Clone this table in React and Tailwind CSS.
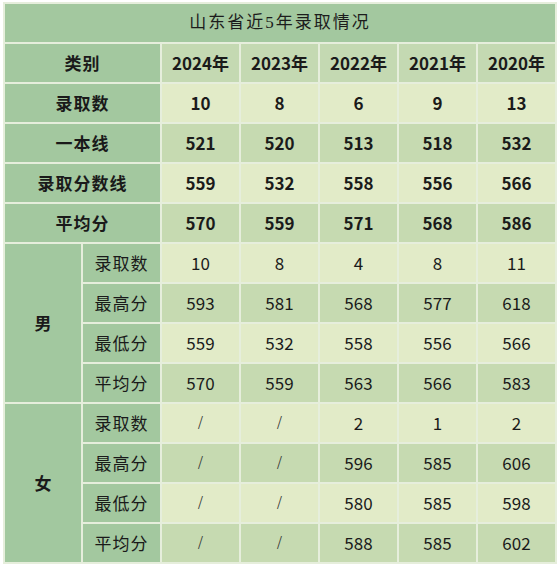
import React from "react";

const years = ["2024年", "2023年", "2022年", "2021年", "2020年"];
const top = [
  ["录取数", ["10", "8", "6", "9", "13"]],
  ["一本线", ["521", "520", "513", "518", "532"]],
  ["录取分数线", ["559", "532", "558", "556", "566"]],
  ["平均分", ["570", "559", "571", "568", "586"]],
];
const groups = [
  [
    "男",
    [
      ["录取数", ["10", "8", "4", "8", "11"]],
      ["最高分", ["593", "581", "568", "577", "618"]],
      ["最低分", ["559", "532", "558", "556", "566"]],
      ["平均分", ["570", "559", "563", "566", "583"]],
    ],
  ],
  [
    "女",
    [
      ["录取数", ["/", "/", "2", "1", "2"]],
      ["最高分", ["/", "/", "596", "585", "606"]],
      ["最低分", ["/", "/", "580", "585", "598"]],
      ["平均分", ["/", "/", "588", "585", "602"]],
    ],
  ],
];

const font = { fontFamily: '"Noto Sans CJK SC", "Noto Sans", sans-serif' };

export default function App() {
  const cells = [];
  cells.push(
    <div
      key="title"
      className="col-span-7 flex items-center justify-center bg-[#a3c89f] text-[17px] tracking-[2px] text-[#1c1c1c]"
      style={{ fontFamily: '"Liberation Serif", "Noto Sans CJK SC", serif' }}
    >
      山东省近5年录取情况
    </div>
  );
  cells.push(
    <div key="h0" className="col-span-2 flex items-center justify-center bg-[#a3c89f] font-bold text-[17px] tracking-[1px]">
      类别
    </div>
  );
  years.forEach((y) =>
    cells.push(
      <div key={y} className="flex items-center justify-center bg-[#c4d9b2] font-bold text-[17px]">
        {y}
      </div>
    )
  );
  top.forEach(([label, vals], i) => {
    const bg = i % 2 === 0 ? "bg-[#e2ebc8]" : "bg-[#c6dab1]";
    cells.push(
      <div key={"t" + i} className="col-span-2 flex items-center justify-center bg-[#a3c89f] font-bold text-[17px] tracking-[1px]">
        {label}
      </div>
    );
    vals.forEach((v, j) =>
      cells.push(
        <div key={"t" + i + j} className={"flex items-center justify-center font-bold text-[17px] " + bg}>
          {v}
        </div>
      )
    );
  });
  groups.forEach(([g, rows], gi) => {
    cells.push(
      <div key={"g" + gi} className="row-span-4 flex items-center justify-center bg-[#a2c89f] font-bold text-[17px]">
        {g}
      </div>
    );
    rows.forEach(([label, vals], i) => {
      const bg = i % 2 === 0 ? "bg-[#e2ebc8]" : "bg-[#c6dab1]";
      cells.push(
        <div key={"g" + gi + i} className="flex items-center justify-center bg-[#a3c89f] text-[17px] tracking-[1px]">
          {label}
        </div>
      );
      vals.forEach((v, j) =>
        cells.push(
          <div
            key={"g" + gi + i + j}
            className={"flex items-center justify-center text-[17px] " + bg}
          >
            {v === "/" ? (
              <span className="text-[16px] font-light text-[#333]" style={{ fontFamily: '"DejaVu Sans", sans-serif' }}>/</span>
            ) : (
              v
            )}
          </div>
        )
      );
    });
  });

  return (
    <div className="w-[559px] h-[566px] bg-white pt-[2px] pl-[3px]" style={font}>
      <div className="grid w-[554px] grid-cols-[76px_77px_repeat(5,77px)] grid-rows-[repeat(14,38px)] gap-[2px] bg-[#e6eedc] p-[2px] text-[#1a1a1a]">
        {cells}
      </div>
    </div>
  );
}
